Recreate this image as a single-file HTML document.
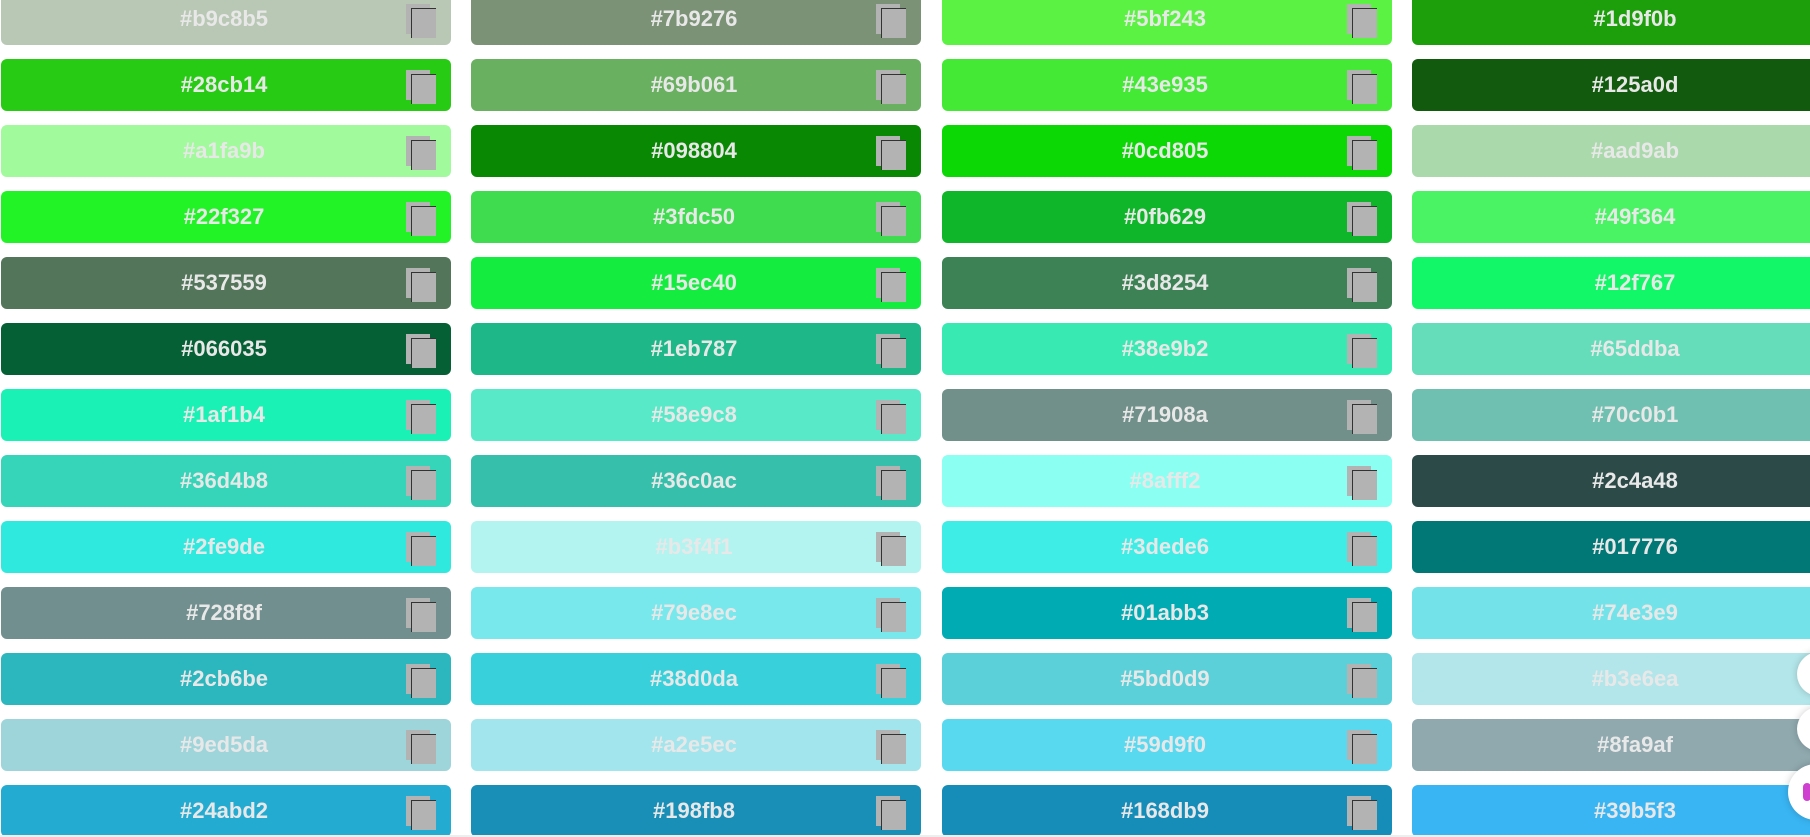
<!DOCTYPE html>
<html><head><meta charset="utf-8"><style>
html,body{margin:0;padding:0;background:#fff;width:1810px;height:837px;overflow:hidden;position:relative}
.c{position:absolute;width:450px;height:52px;border-radius:6px;font:bold 22px/52px "Liberation Sans",Arial,sans-serif;color:#e8e8e8;text-align:center}
.c span{position:relative;left:-2px}
.b{position:absolute;left:405px;top:11px;width:24px;height:30px;background:#b3b3b3}
.f{position:absolute;left:410px;top:15px;width:24px;height:29px;background:#b3b3b3;border-left:1px solid #333;border-top:1px solid #333}
.r{position:absolute;border-radius:50%;background:#fff;box-shadow:0 0 8px rgba(0,0,0,.2)}
</style></head><body>
<div id="g"></div>
<div style="position:absolute;left:0;top:835px;width:1810px;height:2px;background:#eee"></div>
<div class="r" style="left:1797px;top:652px;width:44px;height:44px"></div>
<div class="r" style="left:1797px;top:707px;width:44px;height:44px"></div>
<div class="r" style="left:1788px;top:764px;width:56px;height:56px"></div>
<div style="position:absolute;left:1803px;top:783px;width:8px;height:18px;background:#d040d0;border-radius:4px"></div>
<script>
var cols=[
["b9c8b5","28cb14","a1fa9b","22f327","537559","066035","1af1b4","36d4b8","2fe9de","728f8f","2cb6be","9ed5da","24abd2"],
["7b9276","69b061","098804","3fdc50","15ec40","1eb787","58e9c8","36c0ac","b3f4f1","79e8ec","38d0da","a2e5ec","198fb8"],
["5bf243","43e935","0cd805","0fb629","3d8254","38e9b2","71908a","8afff2","3dede6","01abb3","5bd0d9","59d9f0","168db9"],
["1d9f0b","125a0d","aad9ab","49f364","12f767","65ddba","70c0b1","2c4a48","017776","74e3e9","b3e6ea","8fa9af","39b5f3"]];
var xs=[1,471,942,1412],h="";
for(var c=0;c<4;c++)for(var r=0;r<13;r++){
h+='<div class="c" style="left:'+xs[c]+'px;top:'+(-7+66*r)+'px;background:#'+cols[c][r]+'"><span>#'+cols[c][r]+'</span><div class="b"></div><div class="f"></div></div>';}
document.getElementById('g').innerHTML=h;
</script>
</body></html>
